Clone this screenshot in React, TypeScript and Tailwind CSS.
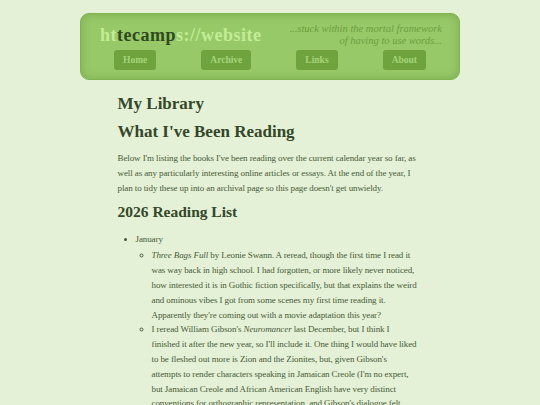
import React from 'react';

const navItems = ['Home', 'Archive', 'Links', 'About'];

const App: React.FC = () => {
  return (
    <div className="min-h-[405px] bg-[#e4f1d6] font-['Liberation_Serif',serif] text-[#485a38]">
      {/* Header */}
      <header className="mx-auto w-[380px] pt-[13px]">
        <div className="rounded-[9px] border border-[#80b451] bg-[#97c968] pb-[9px] pt-[9px] shadow-[inset_0_0_10px_rgba(90,140,50,0.45)]">
          <div className="flex items-center justify-between pl-[19px] pr-[17px]">
            <h1 className="text-[18px] font-bold leading-none tracking-[0.5px] text-[#c3ec96]">
              ht<span className="text-[#2f4a1f]">tecamp</span>s://website
            </h1>
            <p className="text-right text-[10.5px] italic leading-[12px] text-[#6c9f40]">
              ...stuck within the mortal framework
              <br />
              of having to use words...
            </p>
          </div>
          <nav className="mt-[3px] flex justify-between px-[33px]">
            {navItems.map(item => (
              <a
                key={item}
                className="rounded-[3px] bg-[#6fa33d] px-[9px] py-[3px] text-[9.5px] font-bold text-[#a6d47a]"
              >
                {item}
              </a>
            ))}
          </nav>
        </div>
      </header>

      {/* Content */}
      <main className="mx-auto w-[305px] pt-[13px] text-[9px] leading-[14.8px] tracking-[-0.1px]">
        <h2 className="text-[17px] font-bold leading-[22px] tracking-normal text-[#34472a]">My Library</h2>
        <h2 className="mt-[6px] text-[17px] font-bold leading-[22px] tracking-normal text-[#34472a]">
          What I've Been Reading
        </h2>
        <p className="mt-[8px]">
          Below I'm listing the books I've been reading over the current calendar year so far, as well as any
          particularly interesting online articles or essays. At the end of the year, I plan to tidy these up into an
          archival page so this page doesn't get unwieldy.
        </p>
        <h3 className="mt-[6px] text-[15.5px] font-bold leading-[20px] tracking-normal text-[#34472a]">
          2026 Reading List
        </h3>
        <ul className="mt-[10px] list-disc pl-[18px]">
          <li>
            January
            <ul className="mt-[2px] list-[circle] pl-[16px] pr-[5px]">
              <li>
                <i>Three Bags Full</i> by Leonie Swann. A reread, though the first time I read it was way back in high
                school. I had forgotten, or more likely never noticed, how interested it is in Gothic fiction
                specifically, but that explains the weird and ominous vibes I got from some scenes my first time reading
                it. Apparently they're coming out with a movie adaptation this year?
              </li>
              <li>
                I reread William Gibson's <i>Neuromancer</i> last December, but I think I finished it after the new
                year, so I'll include it. One thing I would have liked to be fleshed out more is Zion and the Zionites,
                but, given Gibson's attempts to render characters speaking in Jamaican Creole (I'm no expert, but
                Jamaican Creole and African American English have very distinct conventions for orthographic
                representation, and Gibson's dialogue felt more like the latter than the former), maybe it was better
                he didn't try.
              </li>
            </ul>
          </li>
        </ul>
      </main>
    </div>
  );
};

export default App;
